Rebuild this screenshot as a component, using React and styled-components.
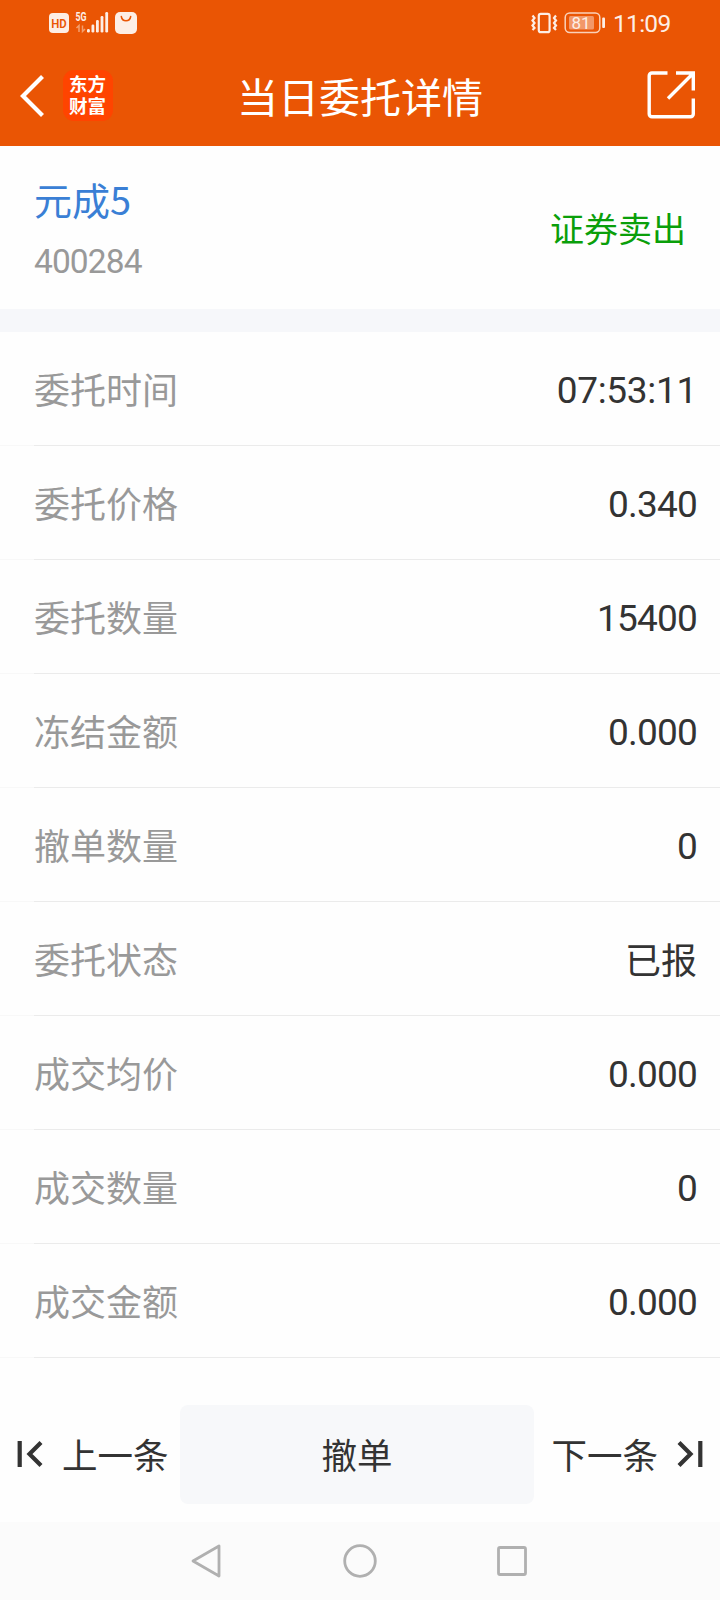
import React from 'react';
import styled, { createGlobalStyle } from 'styled-components';

const GlobalStyle = createGlobalStyle`
    body {
        margin: 0;
        background-color: #fefefe;
        font-family: "Noto Sans CJK SC", sans-serif;
    }

    svg {
        display: block;
        flex: none;
    }
`;

const Screen = styled.div`
    display: flex;
    flex-direction: column;
    width: 720px;
    height: 1600px;
    overflow: hidden;
`;

const StatusBar = styled.div`
    display: flex;
    justify-content: space-between;
    height: 46px;
    padding: 0 49px 0 48px;
    box-sizing: border-box;
    background-color: #ea5504;
    color: #fdeee5;
`;

const StatusGroup = styled.div`
    display: flex;
    align-items: center;
`;

const Clock = styled.span`
    width: 58px;
    margin-left: 7px;
    font-family: Roboto, sans-serif;
    font-size: 24.5px;
    line-height: 47px;
    letter-spacing: -0.7px;
`;

const Header = styled.header`
    display: grid;
    grid-template-columns: 140px 1fr 140px;
    align-items: center;
    height: 100px;
    background-color: #ea5504;
    color: #ffffff;
`;

const HeaderLeft = styled.div`
    display: flex;
    align-items: center;
    gap: 18px;
    padding: 0 0 1px 20px;
`;

const HeaderRight = styled.div`
    display: flex;
    justify-content: flex-end;
    padding: 0 24px 2px 0;
`;

const Logo = styled.div`
    width: 50px;
    height: 51px;
    padding: 2px 6px 0;
    box-sizing: border-box;
    border-radius: 11px;
    background-color: #ff4400;
    font-size: 18.5px;
    font-weight: 700;
    line-height: 22px;
`;

const Title = styled.h1`
    margin: 0;
    padding-bottom: 2px;
    text-align: center;
    font-size: 41px;
    font-weight: 400;
    line-height: 60px;
    white-space: nowrap;
`;

const Summary = styled.section`
    display: flex;
    justify-content: space-between;
    align-items: center;
    height: 163px;
    padding: 0 34px;
    box-sizing: border-box;
`;

const Stock = styled.div`
    padding-top: 8px;
`;

const StockName = styled.div`
    color: #3a7fd5;
    font-size: 38px;
    line-height: 60px;
`;

const StockCode = styled.div`
    color: #999999;
    font-family: Roboto, sans-serif;
    font-size: 33.5px;
    line-height: 66px;
    letter-spacing: -0.9px;
`;

const Direction = styled.div`
    color: #0a9f0a;
    font-size: 34px;
    line-height: 50px;
`;

const Divider = styled.div`
    height: 23px;
    background-color: #f6f7fa;
`;

const DetailRow = styled.div`
    display: flex;
    justify-content: space-between;
    height: 114px;
    padding: 0 23px 0 34px;
    box-sizing: border-box;
    background: linear-gradient(to right, #f8f8f8 34px, #ebebeb 34px) bottom / 100% 1px no-repeat;
    font-size: 36px;
    line-height: 112px;
`;

const Label = styled.span`
    color: #999999;
`;

const Value = styled.span`
    color: #333333;
`;

const NumericValue = styled(Value)`
    font-family: Roboto, sans-serif;
    font-size: 37px;
    line-height: 118px;
    letter-spacing: ${props => props.$time ? '-0.3px' : '-0.8px'};
`;

const Actions = styled.div`
    display: grid;
    grid-template-columns: 180px 354px 186px;
    grid-template-rows: 99px;
    height: 99px;
    margin: 47px 0 18px;
    color: #333333;
    font-size: 35.5px;
`;

const PagerButton = styled.div`
    display: flex;
    align-items: center;
    justify-content: ${props => props.$side === 'left' ? 'flex-start' : 'flex-end'};
    gap: 19px;
    padding: ${props => props.$side === 'left' ? '0 0 2px 17px' : '0 17px 2px 0'};
    white-space: nowrap;
`;

const CancelButton = styled.div`
    border-radius: 8px;
    background-color: #f7f8fa;
    text-align: center;
    line-height: 98px;
`;

const NavBar = styled.nav`
    display: flex;
    justify-content: center;
    gap: 118px;
    height: 78px;
    padding-top: 21px;
    box-sizing: border-box;
    background-color: #fbfbfb;
`;

const details = [
    { label: '委托时间', value: '07:53:11', type: 'time' },
    { label: '委托价格', value: '0.340', type: 'number' },
    { label: '委托数量', value: '15400', type: 'number' },
    { label: '冻结金额', value: '0.000', type: 'number' },
    { label: '撤单数量', value: '0', type: 'number' },
    { label: '委托状态', value: '已报', type: 'text' },
    { label: '成交均价', value: '0.000', type: 'number' },
    { label: '成交数量', value: '0', type: 'number' },
    { label: '成交金额', value: '0.000', type: 'number' },
];

const SignalIcons = () => (
    <svg width="92" height="46" viewBox="48 0 92 46" fill="#fdeee5">
        <rect x="49" y="13" width="20" height="20" rx="4" />
        <text x="59" y="28" textAnchor="middle" fontFamily="Roboto, sans-serif" fontSize="13.5" fontWeight="600" fill="#ea5504" textLength="15.5" lengthAdjust="spacingAndGlyphs">HD</text>
        <text x="75.5" y="20.5" fontFamily="Roboto, sans-serif" fontSize="12" fontWeight="700" textLength="11" lengthAdjust="spacingAndGlyphs">5G</text>
        <path d="M79 32v-6.500l-2.500 2.500M82.500 25.500v6l2.500-2.500" fill="none" stroke="#f3a06f" strokeWidth="1.500" />
        <rect x="87" y="29" width="2.800" height="3.500" rx="1.200" />
        <rect x="91.500" y="24.500" width="2.800" height="8" rx="1.200" />
        <rect x="96" y="20" width="2.800" height="12.500" rx="1.200" />
        <rect x="100.600" y="16" width="2.800" height="16.500" rx="1.200" />
        <rect x="105.300" y="12" width="2.800" height="20.500" rx="1.200" />
        <rect x="115" y="12" width="22" height="22" rx="5" />
        <path d="M121.300 16.500c1 5.700 8.400 5.700 9.400 0" fill="none" stroke="#ea5504" strokeWidth="1.500" strokeLinecap="round" />
    </svg>
);

const BatteryIcons = () => (
    <svg width="76" height="46" viewBox="530 0 76 46" fill="none" stroke="#fdeee5">
        <rect x="538.800" y="13.800" width="10.800" height="18.400" rx="2" strokeWidth="2.200" />
        <path d="M532.500 15.500l2 2.500-2 2.500 2 2.500-2 2.500 2 2.500-2 2M556 15.500l-2 2.500 2 2.500-2 2.500 2 2.500-2 2.500 2 2" strokeWidth="2.200" />
        <rect x="565.200" y="13" width="34.600" height="19.600" rx="4.500" strokeWidth="1.500" stroke="#fad1b9" />
        <rect x="569" y="16" width="25" height="13.500" rx="1.500" fill="#f29869" stroke="none" />
        <rect x="602.200" y="17.500" width="2.800" height="10.500" rx="1" fill="#fdeee5" stroke="none" />
        <text x="581" y="28.800" textAnchor="middle" fontFamily="Roboto, sans-serif" fontSize="17" fill="#fdeee5" stroke="none">81</text>
    </svg>
);

const BackIcon = () => (
    <svg width="25" height="42" viewBox="0 0 25 42" fill="none" stroke="#ffffff" strokeWidth="4.200">
        <path d="M22.500 1.500L3 21l19.500 19.500" />
    </svg>
);

const ShareIcon = () => (
    <svg width="49" height="49" viewBox="0 0 49 49" fill="none" stroke="#ffffff" strokeWidth="3.400">
        <path d="M20.500 2H5A2.800 2.800 0 0 0 2.200 4.800V43A2.800 2.800 0 0 0 5 45.800H43.500A2.800 2.800 0 0 0 46.300 43V27.500M29 2H46.300V19.500M46 2.500L21 27.500" />
    </svg>
);

const EdgeIcon = ({ flip }) => (
    <svg width="26" height="28" viewBox="0 0 26 28" fill="none" stroke="#333333" strokeWidth="4.200">
        <path d={flip ? 'M23.300 1v26M2 2.500l11.500 11.500L2 25.500' : 'M2.700 1v26M24 2.500L12.500 14 24 25.500'} />
    </svg>
);

const DetailItem = ({ item }) => (
    <DetailRow>
        <Label>{item.label}</Label>
        {item.type === 'text'
            ? <Value>{item.value}</Value>
            : <NumericValue $time={item.type === 'time'}>{item.value}</NumericValue>}
    </DetailRow>
);

const App = () => (
    <>
        <GlobalStyle />
        <Screen>
            <StatusBar>
                <StatusGroup>
                    <SignalIcons />
                </StatusGroup>
                <StatusGroup>
                    <BatteryIcons />
                    <Clock>11:09</Clock>
                </StatusGroup>
            </StatusBar>
            <Header>
                <HeaderLeft>
                    <BackIcon />
                    <Logo>东方财富</Logo>
                </HeaderLeft>
                <Title>当日委托详情</Title>
                <HeaderRight>
                    <ShareIcon />
                </HeaderRight>
            </Header>
            <Summary>
                <Stock>
                    <StockName>元成5</StockName>
                    <StockCode>400284</StockCode>
                </Stock>
                <Direction>证券卖出</Direction>
            </Summary>
            <Divider />
            {details.map(item => <DetailItem key={item.label} item={item} />)}
            <Actions>
                <PagerButton $side="left">
                    <EdgeIcon />
                    <span>上一条</span>
                </PagerButton>
                <CancelButton>撤单</CancelButton>
                <PagerButton $side="right">
                    <span>下一条</span>
                    <EdgeIcon flip />
                </PagerButton>
            </Actions>
            <NavBar>
                <svg width="34" height="36" viewBox="0 0 34 36" fill="none" stroke="#b0b0b0" strokeWidth="2.800" strokeLinejoin="round">
                    <path d="M29 3v30L3 18z" />
                </svg>
                <svg width="36" height="36" viewBox="0 0 36 36" fill="none" stroke="#b0b0b0" strokeWidth="2.800">
                    <circle cx="18" cy="18" r="15.300" />
                </svg>
                <svg width="34" height="36" viewBox="0 0 34 36" fill="none" stroke="#b0b0b0" strokeWidth="2.800">
                    <rect x="2.500" y="4.500" width="27" height="27" rx="1.500" />
                </svg>
            </NavBar>
        </Screen>
    </>
);

export default App;
